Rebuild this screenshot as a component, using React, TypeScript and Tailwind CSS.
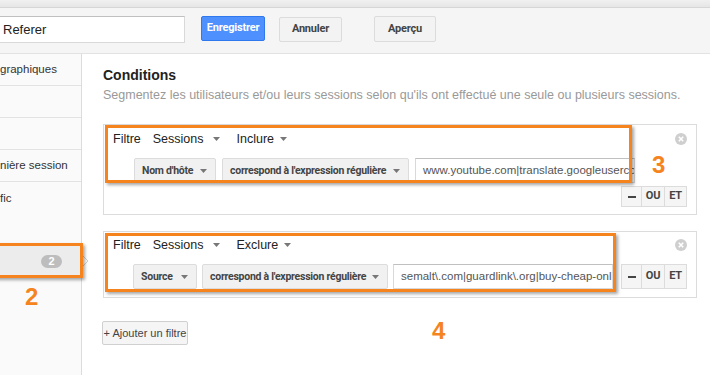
import React from 'react';

const ORANGE = 'border-[3px] border-[#f5841f] shadow-[2px_2px_3px_rgba(0,0,0,0.35)]';
const BTN_FONT = "font-['Roboto',Arial,sans-serif] font-bold text-[11px] tracking-[-0.2px]";
const SEL_FONT = "font-['Roboto',Arial,sans-serif] font-bold text-[10.5px] tracking-[-0.25px]";

function Caret({ className = '' }: { className?: string }) {
  return (
    <svg width="7" height="4" viewBox="0 0 7 4" className={className}>
      <path d="M0 0h7L3.5 4z" fill="#777" />
    </svg>
  );
}

function CloseIcon() {
  return (
    <svg width="12" height="12" viewBox="0 0 12 12">
      <circle cx="6" cy="6" r="6" fill="#cfcfcf" />
      <path d="M3.8 3.8l4.4 4.4M8.2 3.8L3.8 8.2" stroke="#fff" strokeWidth="1.6" />
    </svg>
  );
}

function GrayButton({ label, width }: { label: string; width: string }) {
  return (
    <div
      className={`${width} h-[25px] shrink-0 flex items-center justify-between whitespace-nowrap pl-[7px] pr-[8px] rounded-[2px] border border-[#dcdcdc] bg-[#f1f1f1] text-[#444] ${SEL_FONT}`}
    >
      <span>{label}</span>
      <Caret />
    </div>
  );
}

function ValueInput({ value }: { value: string }) {
  return (
    <div className="w-[220px] h-[25px] shrink-0 overflow-hidden whitespace-nowrap border border-[#d9d9d9] border-t-[#c0c0c0] bg-white pl-[7px] flex items-center text-[11.5px] text-[#555]">
      {value}
    </div>
  );
}

function LogicButtons({ tall }: { tall: boolean }) {
  const h = tall ? 'h-[25px]' : 'h-[21px]';
  return (
    <div className={`flex ${h} text-[#444] ${BTN_FONT}`}>
      <div className="w-[21px] flex items-center justify-center border border-[#dcdcdc] bg-[#f5f5f5]">
        <div className="w-[8px] h-[2px] bg-[#444]" />
      </div>
      <div className="w-[23px] flex items-center justify-center border border-l-0 border-[#dcdcdc] bg-[#f5f5f5]">OU</div>
      <div className="w-[22px] flex items-center justify-center border border-l-0 border-[#dcdcdc] bg-[#f5f5f5]">ET</div>
    </div>
  );
}

function FilterHeader({ mode }: { mode: string }) {
  return (
    <div className="flex items-center justify-between pr-[9px] h-[16px] text-[12.5px] text-[#222]">
      <div className="flex items-center">
        <span>Filtre</span>
        <span className="ml-[12px]">Sessions</span>
        <Caret className="ml-[9px]" />
        <span className="ml-[17px]">{mode}</span>
        <Caret className="ml-[6px]" />
      </div>
      <CloseIcon />
    </div>
  );
}

const sideRows = ['graphiques', '', '', 'nière session'];

export default function App() {
  return (
    <div className="relative w-[710px] h-[375px] overflow-hidden bg-white font-['Liberation_Sans',Arial,sans-serif]">
      {/* top strip */}
      <div className="h-[8px] bg-gradient-to-b from-[#f0f0f0] to-[#e6e6e6] border-b border-[#d6d6d6]" />
      <div className="h-[46px] bg-[#f5f5f5] border-b border-[#e2e2e2] flex items-start pt-[8px]">
        <div className="-ml-px w-[186px] h-[27px] border border-[#d9d9d9] border-t-[#c0c0c0] bg-white flex items-center pl-[3px] text-[13px] text-[#222]">
          Referer
        </div>
        <div className={`ml-[16px] w-[64px] h-[25px] rounded-[2px] border border-[#3079ed] bg-[#4d90fe] text-white flex items-center justify-center ${BTN_FONT}`}>
          Enregistrer
        </div>
        <div className={`ml-[14px] mt-px w-[63px] h-[25px] rounded-[2px] border border-[#dcdcdc] bg-[#f3f3f3] text-[#444] flex items-center justify-center ${BTN_FONT}`}>
          Annuler
        </div>
        <div className={`ml-[32px] w-[62px] h-[26px] rounded-[2px] border border-[#dcdcdc] bg-[#f3f3f3] text-[#444] flex items-center justify-center ${BTN_FONT}`}>
          Aperçu
        </div>
      </div>

      <div className="flex h-[321px]">
        {/* sidebar */}
        <div className="w-[82px] shrink-0 border-r border-[#dcdcdc] bg-[#fafafa] text-[11.5px] text-[#333]">
          {sideRows.map((t, i) => (
            <div key={i} className="h-[32px] border-b border-[#e3e3e3] flex items-center whitespace-nowrap">
              {t}
            </div>
          ))}
          <div className="h-[64px] pt-[8px] whitespace-nowrap">fic</div>
          <div className="h-[31px] bg-[#ececec] flex items-center justify-end pr-[19px]">
            <span className="w-[21px] h-[13px] rounded-full bg-[#bdbdbd] text-white text-[11px] font-bold flex items-center justify-center">
              2
            </span>
          </div>
        </div>

        {/* main */}
        <div className="flex-1 pl-[21px] pt-[13px]">
          <div className="text-[14px] leading-[16px] font-bold text-[#222]">Conditions</div>
          <div className="mt-[4px] text-[12.5px] leading-[16px] text-[#999] whitespace-nowrap">
            Segmentez les utilisateurs et/ou leurs sessions selon qu'ils ont effectué une seule ou plusieurs sessions.
          </div>

          {/* filter 1 */}
          <div className="mt-[21px] w-[594px] border border-[#dcdcdc] pl-[9px] pt-[6px] pb-[7px]">
            <FilterHeader mode="Inclure" />
            <div className="mt-[11px] ml-[21px] flex gap-[6px]">
              <GrayButton label="Nom d'hôte" width="w-[82px]" />
              <GrayButton label="correspond à l'expression régulière" width="w-[187px]" />
              <ValueInput value="www.youtube.com|translate.googleusercontent.com" />
            </div>
            <div className="mt-[3px] flex justify-end pr-[9px]">
              <LogicButtons tall={false} />
            </div>
          </div>

          {/* filter 2 */}
          <div className="mt-[16px] w-[594px] border border-[#dcdcdc] pl-[9px] pt-[5px] pb-[8px]">
            <FilterHeader mode="Exclure" />
            <div className="mt-[11px] ml-[20px] flex items-center gap-[5px]">
              <GrayButton label="Source" width="w-[64px]" />
              <GrayButton label="correspond à l'expression régulière" width="w-[186px]" />
              <ValueInput value="semalt\.com|guardlink\.org|buy-cheap-online" />
              <div className="ml-[3px]">
                <LogicButtons tall={true} />
              </div>
            </div>
          </div>

          <div className="mt-[23px] -ml-px w-[86px] h-[24px] rounded-[2px] border border-[#d0d0d0] bg-[#f5f5f5] text-[11px] text-[#444] whitespace-nowrap flex items-center justify-center">
            + Ajouter un filtre
          </div>
        </div>
      </div>

      {/* sidebar selection pointer */}
      <svg className="absolute left-[81px] top-[254px]" width="8" height="14" viewBox="0 0 8 14">
        <path d="M0 0L7 7L0 14z" fill="#fff" stroke="#d0d0d0" />
        <path d="M0 1v12" stroke="#fff" strokeWidth="1.5" />
      </svg>

      {/* annotations */}
      <div className={`absolute left-[-6px] top-[243px] w-[89px] h-[35px] ${ORANGE}`} />
      <div className={`absolute left-[105px] top-[125px] w-[527px] h-[58px] ${ORANGE}`} />
      <div className={`absolute left-[105px] top-[233px] w-[511px] h-[59px] ${ORANGE}`} />
      <div className="absolute left-[25px] top-[279px] text-[24px] font-bold text-[#f5841f]">2</div>
      <div className="absolute left-[652px] top-[147px] text-[24px] font-bold text-[#f5841f]">3</div>
      <div className="absolute left-[432px] top-[313px] text-[24px] font-bold text-[#f5841f]">4</div>
    </div>
  );
}
